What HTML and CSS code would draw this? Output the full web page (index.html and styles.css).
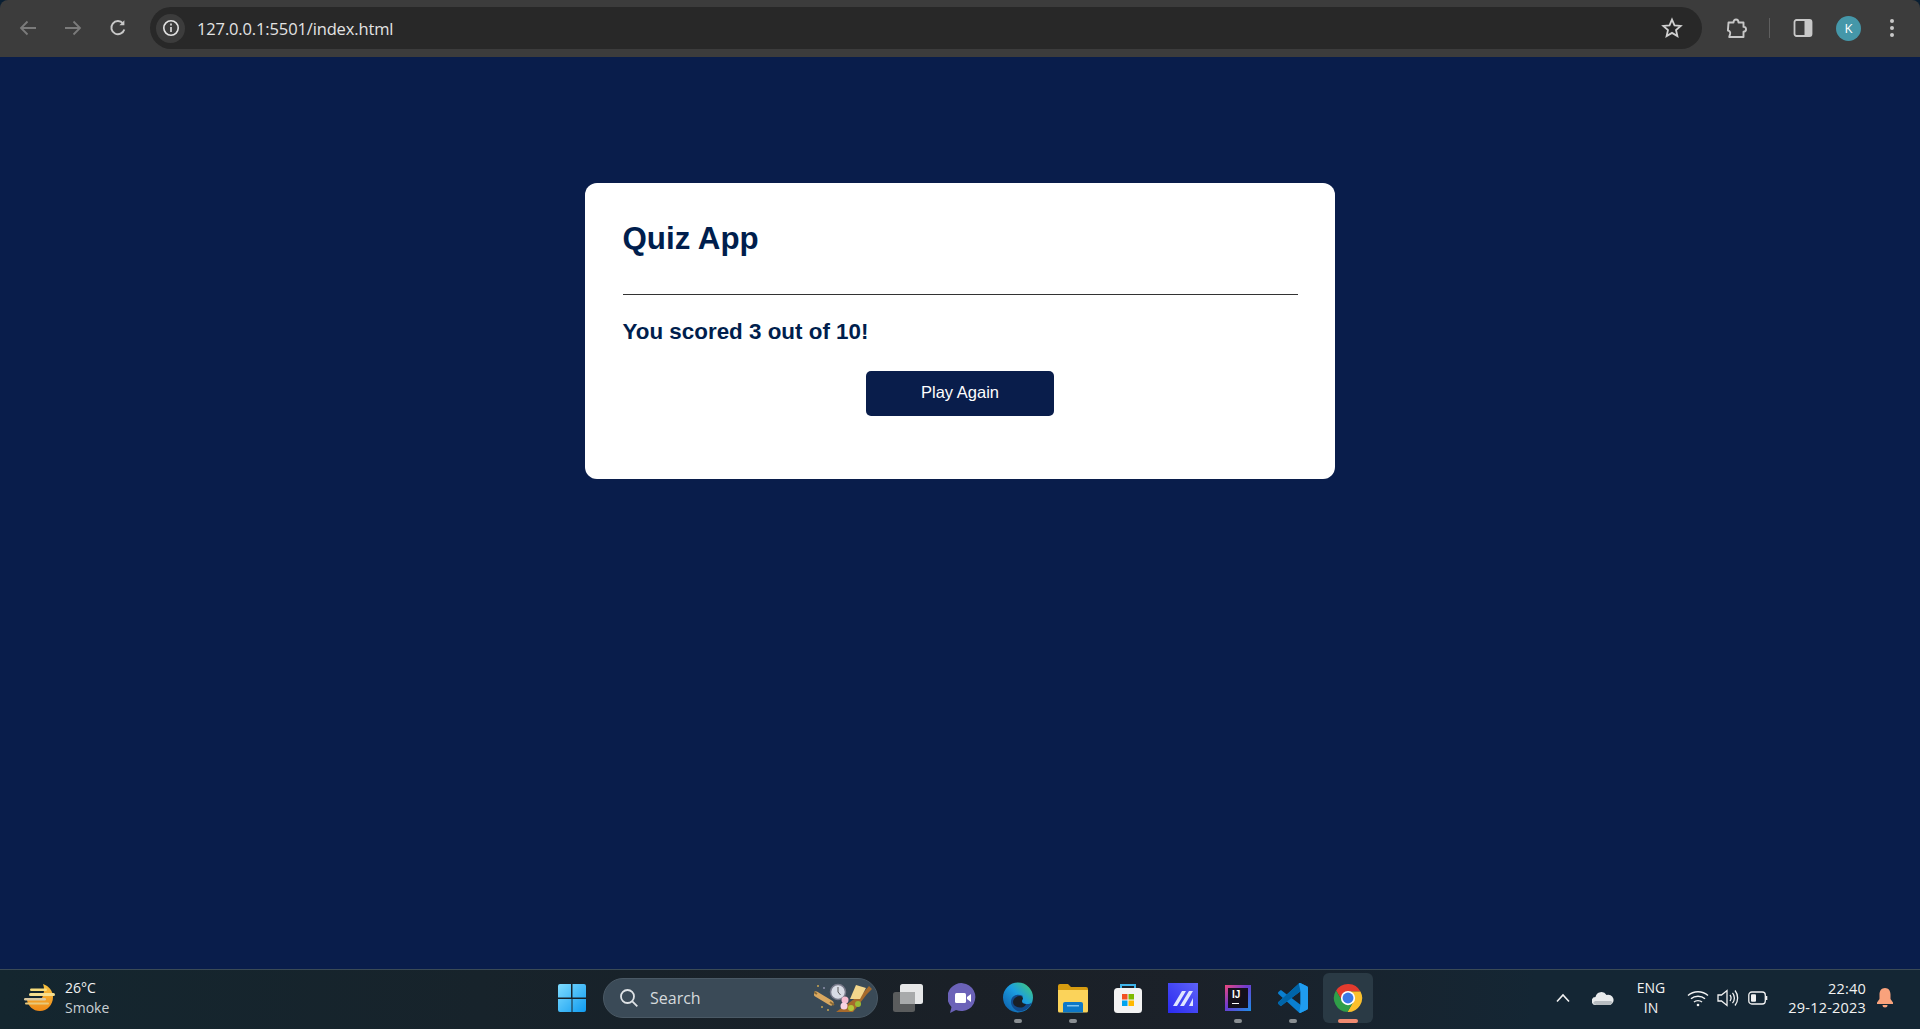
FILE: index.html
```html
<!DOCTYPE html>
<html>

<head>
	<meta charset="UTF-8" />
	<title>Quiz App</title>
	<link rel="stylesheet" href="styles.css">
</head>

<body>
	<!-- browser toolbar -->
	<div class="toolbar">
		<svg class="nav" width="20" height="20" viewBox="0 0 20 20" fill="none" stroke="#7b7b7b" stroke-width="1.8"><path d="M18 10H3M9.5 3.5 3 10l6.5 6.5" /></svg>
		<svg class="nav" width="20" height="20" viewBox="0 0 20 20" fill="none" stroke="#7b7b7b" stroke-width="1.8"><path d="M2 10h15M10.5 3.500 17 10l-6.500 6.500" /></svg>
		<svg class="nav" width="20" height="20" viewBox="0 0 20 20" fill="none" stroke="#c8c8c8" stroke-width="1.9"><path d="M16.300 11.500A6.600 6.600 0 1 1 15 5.400" /><path d="M16.400 2.200v5h-5z" fill="#c8c8c8" stroke="none" /></svg>
		<div class="omnibox">
			<span class="site-info">
				<svg width="18" height="18" viewBox="0 0 18 18" fill="none" stroke="#e3e3e3" stroke-width="1.6"><circle cx="9" cy="9" r="7.200" /><path d="M9 8v5M9 4.600v1.800" /></svg>
			</span>
			<span class="url">127.0.0.1:5501/index.html</span>
			<svg class="star" width="22" height="22" viewBox="0 0 22 22" fill="none" stroke="#d0d0d0" stroke-width="1.8"><path d="m11 2.600 2.500 5.700 6.200.6-4.700 4.100 1.400 6.100-5.400-3.200-5.400 3.200L7 13 2.300 8.900l6.200-.6z" /></svg>
		</div>
		<svg class="ext" width="22" height="22" viewBox="0 0 22 22" fill="none" stroke="#c8c8c8" stroke-width="1.9"><path d="M2.500 5.500h5c0-4 5-4 5 0h5v4.400c3.400 0 3.400 4.800 0 4.800v5.300H3.200l.9-3c.6-2.200-.8-3.400-2.200-3.400z" stroke-linejoin="round" /></svg>
		<span class="tool-divider"></span>
		<svg class="panel" width="20" height="20" viewBox="0 0 20 20"><rect x="1.500" y="2" width="17" height="16" rx="2" fill="none" stroke="#c8c8c8" stroke-width="1.800" /><path d="M11.500 2h5a2 2 0 0 1 2 2v12a2 2 0 0 1-2 2h-5z" fill="#c8c8c8" /></svg>
		<span class="avatar">K</span>
		<span class="dots"><i></i><i></i><i></i></span>
	</div>

	<div class="page">
		<div class="card">
			<h1>Quiz App</h1>
			<hr>
			<h2>You scored 3 out of 10!</h2>
			<button class="play">Play Again</button>
		</div>
	</div>

	<!-- windows taskbar -->
	<div class="taskbar">
		<div class="weather">
			<svg width="32" height="30" viewBox="0 0 32 30">
				<defs>
					<linearGradient id="sun" x1="0" y1="0" x2="0" y2="1"><stop offset="0" stop-color="#f9c440" /><stop offset="1" stop-color="#f08a17" /></linearGradient>
				</defs>
				<path d="M19 1c6 2 10 7 10 13 0 8-6 14-13 14S4 23 3 17h14c3-5 4-11 2-16z" fill="url(#sun)" />
				<rect x="6" y="5.500" width="17" height="2.500" rx="1.200" fill="#f7dc7c" />
				<rect x="5" y="10" width="26" height="3" rx="1.500" fill="#f6df8f" />
				<rect x="0" y="15" width="22" height="2.500" rx="1.200" fill="#dcc9a0" />
				<rect x="1" y="19.500" width="24" height="2" rx="1" fill="#e9c878" />
			</svg>
			<div class="weather-text">
				<span class="temp">26°C</span>
				<span class="cond">Smoke</span>
			</div>
		</div>

		<div class="apps">
			<span class="app">
				<svg width="30" height="30" viewBox="0 0 30 30">
					<defs>
						<linearGradient id="win" x1="0" y1="0" x2="1" y2="1"><stop offset="0" stop-color="#7fdcff" /><stop offset="1" stop-color="#0f9bf0" /></linearGradient>
					</defs>
					<path d="M1 3a2 2 0 0 1 2-2h11v13.500H1zM15.500 1H27a2 2 0 0 1 2 2v11.500H15.500zM1 16h13.500v13H3a2 2 0 0 1-2-2zM15.500 16H29v11a2 2 0 0 1-2 2H15.500z" fill="url(#win)" />
				</svg>
			</span>
			<div class="search">
				<svg width="20" height="20" viewBox="0 0 20 20" fill="none" stroke="#dfe3e6" stroke-width="1.800"><circle cx="8.500" cy="8.500" r="6.500" /><path d="m13.300 13.300 5 5" /></svg>
				<span>Search</span>
				<svg class="doodle" width="62" height="32" viewBox="0 0 62 32">
					<path d="M2 12l15 9" stroke="#d9a860" stroke-width="5" stroke-linecap="round" />
					<path d="M0 10l3 2M16 20l4 3" stroke="#8a6a35" stroke-width="2" />
					<circle cx="4" cy="4" r="1" fill="#c9a550" />
					<circle cx="10" cy="6" r="1" fill="#8d8fa8" />
					<circle cx="8" cy="25" r="1" fill="#c9a550" />
					<circle cx="14" cy="28" r="1" fill="#c9a550" />
					<circle cx="24" cy="10" r="7.500" fill="#d8dce6" stroke="#77798a" stroke-width="1.500" />
					<path d="M24 5v5l2.500 3" stroke="#555" fill="none" />
					<path d="M22 30 50 10l5-6 3 3-5 5-14 18H26z" fill="#a66a2c" />
					<path d="M36 17 42 3l10 3-6 11z" fill="#f3d68c" />
					<circle cx="44" cy="22" r="3" fill="#9aba35" />
					<circle cx="37" cy="26" r="3" fill="#b5c63a" />
					<circle cx="31" cy="18" r="3.500" fill="#f5bcd0" />
					<circle cx="30" cy="24" r="3.500" fill="#f7d4e2" />
				</svg>
			</div>
			<span class="app">
				<svg width="32" height="30" viewBox="0 0 32 30">
					<rect x="1" y="9" width="22" height="20" rx="2.500" fill="#5a5c5d" />
					<rect x="8" y="1" width="23" height="20" rx="2.500" fill="#e6e7e8" />
					<rect x="8" y="9" width="15" height="12" fill="#a8aaab" />
				</svg>
			</span>
			<span class="app">
				<svg width="30" height="30" viewBox="0 0 30 30">
					<path d="M2 30l1.500-6A14 14 0 1 1 8 27z" fill="#6b62b8" />
					<rect x="7" y="10" width="11" height="10" rx="1.500" fill="#fff" />
					<path d="m19 14 4-3v8l-4-3z" fill="#fff" />
				</svg>
			</span>
			<span class="app">
				<svg width="32" height="32" viewBox="0 0 32 32">
					<defs>
						<linearGradient id="edge" x1="0" y1="1" x2="1" y2="0"><stop offset="0" stop-color="#0c59a4" /><stop offset=".55" stop-color="#1b9de2" /><stop offset="1" stop-color="#48d06c" /></linearGradient>
					</defs>
					<circle cx="16" cy="15.500" r="15" fill="url(#edge)" />
					<path d="M31 17c0 3-2 5-6 5-4 0-6-1-6-4 0-2 1-3 2-4-6-3-12 0-12 6 0 4 3 8 8 9.500 7 0 13-5 14-12.500z" fill="#114a8b" />
					<path d="M11 20c0-3 3-6 7-6 2 0 3 1 3 3-2 2-1 5 3 5-2 6-13 4-13-2z" fill="#1a2027" />
				</svg>
			</span>
			<span class="app">
				<svg width="30" height="30" viewBox="0 0 30 30">
					<path d="M0 3a2 2 0 0 1 2-2h8l3 3h15a2 2 0 0 1 2 2v3H0z" fill="#d79c10" />
					<path d="M0 7h30v21a1.500 1.500 0 0 1-1.500 1.500h-27A1.500 1.500 0 0 1 0 28z" fill="#fbd35a" />
					<path d="M5 29.500V21a2 2 0 0 1 2-2h16a2 2 0 0 1 2 2v8.500z" fill="#0d78c8" />
					<rect x="9" y="22" width="12" height="1.500" fill="#7fc4f0" />
				</svg>
			</span>
			<span class="app">
				<svg width="30" height="30" viewBox="0 0 30 30">
					<path d="M8 6V2h14v4" fill="none" stroke="#3eb4ea" stroke-width="2" />
					<rect x="1" y="5" width="28" height="25" rx="3.500" fill="#f3f3f3" />
					<rect x="9" y="11" width="5.500" height="5.500" fill="#f25022" />
					<rect x="15.500" y="11" width="5.500" height="5.500" fill="#7fba00" />
					<rect x="9" y="17.500" width="5.500" height="5.500" fill="#00a4ef" />
					<rect x="15.500" y="17.500" width="5.500" height="5.500" fill="#ffb900" />
				</svg>
			</span>
			<span class="app">
				<svg width="30" height="30" viewBox="0 0 30 30">
					<defs>
						<linearGradient id="mez" x1="0" y1="1" x2="1" y2="0"><stop offset="0" stop-color="#2a2af0" /><stop offset="1" stop-color="#5d62f8" /></linearGradient>
					</defs>
					<rect width="30" height="30" fill="url(#mez)" />
					<path d="M5 23 14 8h4L9 23zM12 23l9-15h4l-9 15zM21 23l4-8v8z" fill="#dfe6ff" />
				</svg>
			</span>
			<span class="app">
				<span class="ij">
					<span class="ij-box">IJ<i></i></span>
				</span>
			</span>
			<span class="app">
				<svg width="30" height="30" viewBox="0 0 100 100">
					<path fill-rule="evenodd" d="M70.900 99.300c1.600.6 3.400.6 5-.2l20.600-9.900c2.100-1 3.500-3.200 3.500-5.600V16.400c0-2.400-1.400-4.600-3.500-5.600L75.900.9c-2.100-1-4.600-.8-6.400.5-.3.2-.5.4-.7.7L29.400 38 12.200 25c-1.600-1.200-3.800-1.100-5.300.2l-5.500 5c-1.800 1.700-1.800 4.500 0 6.200L16.200 50 1.400 63.600c-1.800 1.700-1.800 4.500 0 6.100l5.500 5c1.500 1.400 3.700 1.500 5.300.3L29.400 62l39.400 35.900c.6.6 1.300 1.100 2.100 1.400zM75 27.300 45.100 50 75 72.700z" fill="#0a7fd0" />
					<path d="M1.400 63.600 29.400 38 68.800 2.100 75 0v27.300L12.200 75c-1.600 1.200-3.800 1.100-5.300-.3l-5.500-5c-1.800-1.600-1.800-4.400 0-6.100z" fill="#0065a9" />
					<path d="M70.900 99.300c1.600.6 3.400.6 5-.2l20.600-9.900c2.100-1 3.500-3.200 3.500-5.600V16.400c0-2.400-1.400-4.600-3.500-5.600L75.900.9c-2.100-1-4.600-.8-6.400.5L75 27.300v45.400z" fill="#1f9cf0" />
				</svg>
			</span>
			<span class="app app-active">
				<svg width="30" height="30" viewBox="0 0 32 32">
					<path d="M3.290 7.980A15 15 0 0 1 29.300 9H16L9.940 19.500z" fill="#e33b2e" />
					<path d="M29.300 9A15 15 0 0 1 15.410 31.020L22.060 19.500 16 9z" fill="#fbc02d" />
					<path d="M15.410 31.020A15 15 0 0 1 3.290 7.980L9.940 19.500h12.120z" fill="#2f9e48" />
					<circle cx="16" cy="16" r="7.600" fill="#fff" />
					<circle cx="16" cy="16" r="5.800" fill="#3b78e7" />
				</svg>
			</span>
		</div>

		<div class="tray">
			<span class="tray-item w36">
				<svg width="16" height="10" viewBox="0 0 16 10" fill="none" stroke="#f2f2f2" stroke-width="1.600"><path d="M2 8.500 8 2l6 6.500" /></svg>
			</span>
			<span class="tray-item w36">
				<svg width="22" height="14" viewBox="0 0 22 14"><path d="M4 14a4 4 0 0 1-.500-8A6 6 0 0 1 14.500 4 4.500 4.500 0 0 1 18 14z" fill="#e8eaec" /><path d="M3 10h16l2 1.500-3 2.500H4l-3-2z" fill="#b7bcc0" /></svg>
			</span>
			<div class="lang">ENG<br>IN</div>
			<span class="tray-item w30">
				<svg width="22" height="17" viewBox="0 0 22 17" fill="none" stroke="#f2f2f2" stroke-width="1.400"><path d="M1 5.500c5.500-5 14.500-5 20 0M4 8.800c3.800-3.500 10.200-3.500 14 0M7 12c2-1.800 6-1.800 8 0" /><circle cx="11" cy="15" r="1.300" fill="#f2f2f2" stroke="none" /></svg>
			</span>
			<span class="tray-item w30">
				<svg width="22" height="18" viewBox="0 0 22 18" fill="none" stroke="#f2f2f2" stroke-width="1.300"><path d="M1 6h3.500L10 1.500v15L4.500 12H1z" /><path d="M13 6c1.300 1.800 1.300 4.200 0 6M15.500 3.800c2.500 3 2.500 7.400 0 10.400M18 1.500c3.500 4.300 3.500 10.700 0 15" /></svg>
			</span>
			<span class="tray-item w30">
				<svg width="20" height="14" viewBox="0 0 20 14" fill="none"><rect x=".800" y="1" width="16.500" height="12" rx="3" stroke="#f2f2f2" stroke-width="1.300" /><rect x="3" y="3.200" width="5" height="7.600" rx="1" fill="#f2f2f2" /><path d="M18.500 5v4" stroke="#f2f2f2" stroke-width="1.600" /></svg>
			</span>
			<div class="clock">22:40<br>29-12-2023</div>
			<span class="tray-item bell">
				<svg width="16" height="20" viewBox="0 0 16 20"><path d="M8 0c3.500 0 5.500 2.800 5.500 6.500V11L16 14.500V16H0v-1.500L2.500 11V6.500C2.500 2.800 4.500 0 8 0z" fill="#f9a27c" /><path d="M5.500 17h5a2.500 2.500 0 0 1-5 0z" fill="#f9a27c" /></svg>
			</span>
		</div>
	</div>
</body>

</html>
```

FILE: styles.css
```css
* {
	box-sizing: border-box;
}

html,
body {
	height: 100%;
	margin: 0;
}

body {
	display: flex;
	flex-direction: column;
	background: #0a1f33;
	font-family: "Liberation Sans", Arial, sans-serif;
	overflow: hidden;
}

/* toolbar */
.toolbar {
	height: 57px;
	display: flex;
	align-items: center;
	background: #3c3c3c;
	border-radius: 8px 8px 0 0;
	padding: 0 0 1px 18px;
}

.nav {
	margin-right: 25px;
	flex: none;
}

.nav:nth-child(3) {
	margin-right: 22px;
}

.omnibox {
	width: 1552px;
	height: 42px;
	display: flex;
	align-items: center;
	background: #282828;
	border-radius: 21px;
	padding-left: 6px;
}

.site-info {
	width: 29px;
	height: 29px;
	display: flex;
	align-items: center;
	justify-content: center;
	background: #3c3c3c;
	border-radius: 50%;
}

.url {
	margin-left: 12px;
	color: #e3e3e3;
	font-family: "Open Sans", sans-serif;
	font-size: 16.500px;
	letter-spacing: -0.14px;
}

.star {
	margin-left: auto;
	margin-right: 19px;
}

.ext {
	margin-left: 24px;
	flex: none;
}

.tool-divider {
	width: 1px;
	height: 20px;
	margin-left: 21px;
	background: #5f5f5f;
}

.panel {
	margin-left: 23px;
	flex: none;
}

.avatar {
	width: 25px;
	height: 25px;
	margin-left: 23px;
	display: flex;
	align-items: center;
	justify-content: center;
	border-radius: 50%;
	background: #4597a9;
	color: #fff;
	font-family: "Open Sans", sans-serif;
	font-size: 13px;
}

.dots {
	margin-left: 29px;
	display: flex;
	flex-direction: column;
	gap: 3px;
}

.dots i {
	width: 4px;
	height: 4px;
	border-radius: 50%;
	background: #c8c8c8;
}

/* quiz */
.page {
	flex: 1;
	background: #091d4b;
	padding-top: 126px;
}

.card {
	width: 750px;
	height: 296px;
	margin: 0 auto;
	padding: 38px 37.500px 0;
	background: #fff;
	border-radius: 12px;
	color: #001e4d;
}

.card h1 {
	margin: 0 0 37px;
	font-size: 31.300px;
	line-height: 36px;
	font-weight: 600;
}

.card hr {
	margin: 0;
	border: 0;
	height: 1px;
	background: #333;
}

.card h2 {
	margin: 23px 0 25px;
	font-size: 22.400px;
	line-height: 28px;
	font-weight: 600;
}

.play {
	display: block;
	width: 188px;
	height: 45px;
	margin: 0 auto;
	padding: 0 0 2px;
	border: 0;
	border-radius: 5px;
	background: #091d4b;
	color: #fff;
	font-family: inherit;
	font-size: 16.500px;
}

/* taskbar */
.taskbar {
	height: 60px;
	display: flex;
	align-items: center;
	padding-bottom: 3px;
	border-top: 1px solid #3a4a55;
	background: linear-gradient(90deg, #14262f, #1a2027 50%, #1b2129 62%, #142634 80%);
	font-family: "Open Sans", sans-serif;
	color: #f2f2f2;
}

.weather {
	width: 544px;
	display: flex;
	align-items: center;
	padding-left: 24px;
}

.weather-text {
	margin-left: 9px;
	display: flex;
	flex-direction: column;
	font-size: 14px;
	line-height: 20px;
}

.cond {
	color: #c9d0d4;
}

.apps {
	display: flex;
	align-items: center;
}

.app {
	width: 55px;
	height: 50px;
	display: flex;
	align-items: center;
	justify-content: center;
	position: relative;
}

.app:nth-child(n+5):nth-child(-n+6)::after,
.app:nth-child(9)::after,
.app:nth-child(10)::after,
.app-active::after {
	content: "";
	position: absolute;
	left: 23.500px;
	bottom: 0;
	width: 8px;
	height: 4px;
	border-radius: 2px;
	background: #8a8f93;
}

.app-active::before {
	content: "";
	position: absolute;
	inset: 0 2.500px;
	background: #2a3a45;
	border-radius: 6px;
}

.app-active svg {
	position: relative;
}

.app-active::after {
	left: 17.500px;
	width: 20px;
	background: #f08a70;
}

.search {
	width: 275px;
	height: 40px;
	margin: 0 2.500px 0 4px;
	padding-left: 15px;
	display: flex;
	align-items: center;
	background: #3a4a57;
	border: 1px solid #4a5965;
	border-radius: 20px;
	color: #d5dadd;
	font-size: 16px;
}

.search span {
	margin-left: 11px;
}

.doodle {
	margin-left: auto;
	margin-right: 1px;
}

.ij {
	width: 26px;
	height: 26px;
	display: flex;
	align-items: center;
	justify-content: center;
	background: linear-gradient(135deg, #f0477a, #6d3bd1 45%, #1c8fe8);
}

.ij-box {
	width: 20px;
	height: 20px;
	padding: 1px 0 0 4px;
	background: #14101c;
	color: #fff;
	font-family: "Liberation Sans", sans-serif;
	font-size: 10px;
	font-weight: 700;
	line-height: 11px;
}

.ij-box i {
	display: block;
	width: 7px;
	height: 1px;
	margin-top: 3px;
	background: #fff;
}

.tray {
	margin-left: auto;
	padding-right: 16px;
	display: flex;
	align-items: center;
}

.tray-item {
	display: flex;
	align-items: center;
	justify-content: center;
}

.w36 {
	width: 36px;
	margin-right: 4px;
}

.w30 {
	width: 30px;
}

.lang {
	width: 52px;
	margin-right: 6px;
	text-align: center;
	font-size: 14px;
	line-height: 20px;
}

.clock {
	width: 93px;
	text-align: right;
	font-size: 14.500px;
	letter-spacing: 0.2px;
	line-height: 19px;
}

.bell {
	width: 38px;
}
```
